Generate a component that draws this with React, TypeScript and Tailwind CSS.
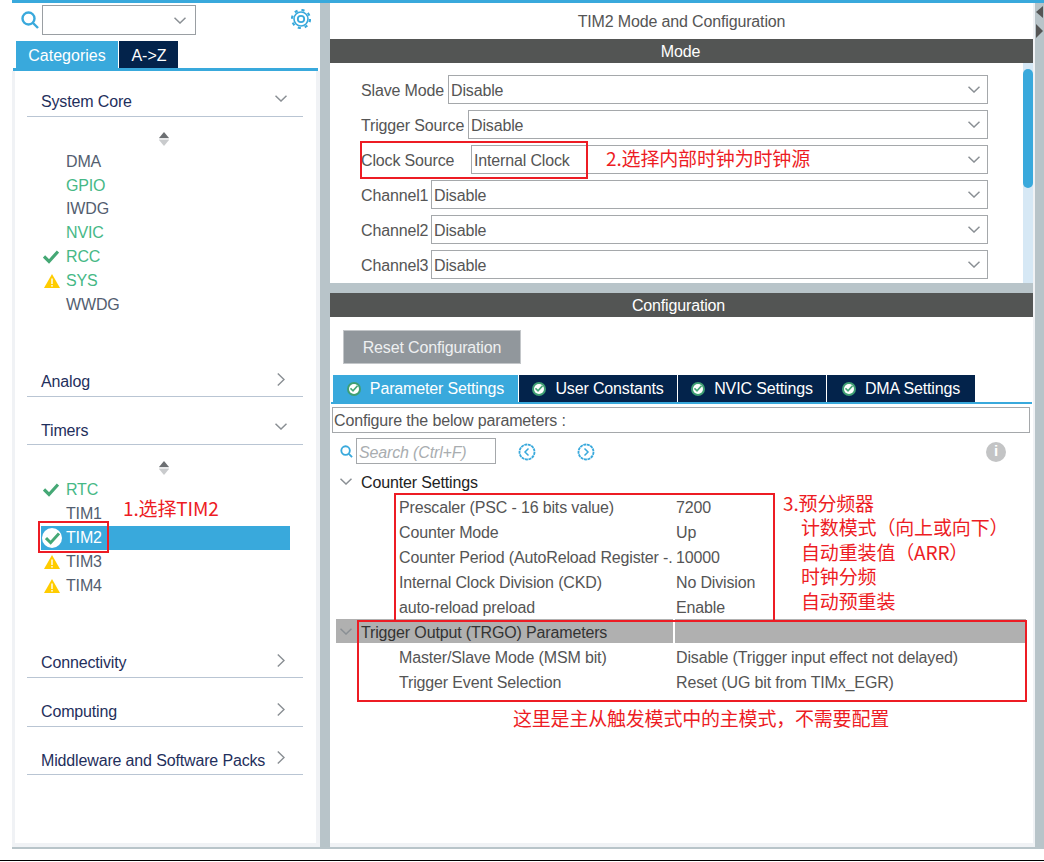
import React from "react";

const font = "[font-family:'Liberation_Sans','Noto_Sans_CJK_SC',sans-serif]";
const cjk = "[font-family:'Noto_Sans_CJK_SC','Liberation_Sans',sans-serif]";

const ChevDown = ({ className = "" }: { className?: string }) => (
  <svg viewBox="0 0 12 7" className={`w-3 h-[7px] ${className}`} fill="none" stroke="#8a8f94" strokeWidth="1.5">
    <path d="M0.5 0.8 L6 6 L11.5 0.8" />
  </svg>
);
const ChevRight = ({ className = "" }: { className?: string }) => (
  <svg viewBox="0 0 8 13" className={`w-2 h-[13px] ${className}`} fill="none" stroke="#8a8f94" strokeWidth="1.4">
    <path d="M0.8 0.5 L7 6.5 L0.8 12.5" />
  </svg>
);
const Check = ({ className = "" }: { className?: string }) => (
  <svg viewBox="0 0 16 14" className={className} fill="none" stroke="#45a875" strokeWidth="3.2">
    <path d="M1 6.5 L6 11.5 L15 1.5" />
  </svg>
);
const Warn = () => (
  <svg viewBox="0 0 16 14" className="w-4 h-[14px] ml-[3px]">
    <path d="M8 0 L16 14 L0 14 Z" fill="#ffcc00" />
    <rect x="7.3" y="4.5" width="1.4" height="5.5" fill="#fff" />
    <rect x="7.3" y="11" width="1.4" height="1.6" fill="#fff" />
  </svg>
);
const Scroller = () => (
  <div className="h-[14px] flex justify-center pr-[4px]">
    <svg viewBox="0 0 10 14" className="w-[10px] h-[14px]">
      <path d="M5 0 L10 6 L0 6 Z" fill="#6c6f72" />
      <rect x="0" y="6.6" width="10" height="0.8" fill="#c4c6c8" />
      <path d="M0 8 L10 8 L5 14 Z" fill="#c9cbcd" />
    </svg>
  </div>
);

type IconT = "check" | "warn" | "selected" | null;
const Item = ({ label, green, icon, selected }: { label: string; green?: boolean; icon?: IconT; selected?: boolean }) => (
  <div className={`h-[23.8px] flex items-center ${selected ? "bg-[#39a9dc]" : ""}`}>
    <div className="w-[25px] flex justify-start shrink-0">
      {icon === "check" && <Check className="w-4 h-[14px] ml-[2px]" />}
      {icon === "warn" && <Warn />}
      {icon === "selected" && (
        <div className="w-5 h-5 ml-px rounded-full bg-white flex items-center justify-center">
          <Check className="w-[15px] h-[13px]" />
        </div>
      )}
    </div>
    <span className={`text-base leading-none ${selected ? "text-white" : green ? "text-[#46b886]" : "text-[#535e70]"}`}>{label}</span>
  </div>
);

const Section = ({ title, open, className = "", textClass = "" }: { title: string; open?: boolean; className?: string; textClass?: string }) => (
  <div className={`h-[33px] ml-[12px] mr-[13px] border-b-[1.5px] border-[#b9c5d3] flex items-start justify-between pl-[14px] pr-[16px] pt-[9px] ${className}`}>
    <span className={`text-base leading-[18px] text-[#1f2f5c] ${textClass}`}>{title}</span>
    {open ? <ChevDown className="mt-[2px]" /> : <ChevRight className="mr-[2px]" />}
  </div>
);

const Sidebar = () => (
  <div className="w-[308px] shrink-0 flex flex-col">
    <div className="h-[38px] flex items-start pt-[2px] shrink-0">
      <svg viewBox="0 0 18 18" className="w-[18px] h-[18px] ml-[9px] mt-[6px]" fill="none" stroke="#39a9dc" strokeWidth="2.4">
        <circle cx="7.5" cy="7.5" r="6" />
        <path d="M12 12 L17 17" />
      </svg>
      <div className="w-[154px] h-[30px] ml-[3px] border border-[#9a9fa3] flex items-center justify-end pr-[9px]">
        <ChevDown />
      </div>
      <svg viewBox="0 0 20 20" className="w-5 h-5 ml-[95px] mt-[4px]" fill="none" stroke="#39a9dc">
        <circle cx="10" cy="10" r="3.2" strokeWidth="1.8" />
        <circle cx="10" cy="10" r="7" strokeWidth="1.6" />
        <circle cx="10" cy="10" r="9" strokeWidth="2.2" strokeDasharray="3.1 4" />
      </svg>
    </div>
    <div className="h-[27px] flex pl-[4px] gap-px shrink-0 text-base text-white tracking-normal">
      <div className="w-[102px] bg-[#39a9dc] flex items-center justify-center pt-[2px]">Categories</div>
      <div className="w-[59px] bg-[#03234b] flex items-center justify-center pt-[2px] pl-px">A-&gt;Z</div>
    </div>
    <div className="h-[3px] ml-px mr-[2px] bg-[#39a9dc] shrink-0" />
    <div className="flex-1 bg-white border-l-[3px] border-r-[4px] border-b-[4px] border-[#f0f2f5] pt-[13px]">
      <Section title="System Core" open />
      <div className="mt-[15px]"><Scroller /></div>
      <div className="ml-[26px] mt-[4px]">
        <Item label="DMA" />
        <Item label="GPIO" green />
        <Item label="IWDG" />
        <Item label="NVIC" green />
        <Item label="RCC" green icon="check" />
        <Item label="SYS" green icon="warn" />
        <Item label="WWDG" />
      </div>
      <Section title="Analog" className="mt-[47.4px]" />
      <Section title="Timers" open className="mt-[15px]" textClass="mt-px" />
      <div className="mt-[16px]"><Scroller /></div>
      <div className="ml-[26px] mr-[26px] mt-[3.6px]">
        <Item label="RTC" green icon="check" />
        <Item label="TIM1" />
        <Item label="TIM2" icon="selected" selected />
        <Item label="TIM3" icon="warn" />
        <Item label="TIM4" icon="warn" />
      </div>
      <Section title="Connectivity" className="mt-[47.9px]" />
      <Section title="Computing" className="mt-[16px]" />
      <Section title="Middleware and Software Packs" className="mt-[15px]" textClass="mt-px" />
    </div>
  </div>
);

const Select = ({ label, value, w }: { label: string; value: string; w: string }) => (
  <div className="h-[29px] flex items-center pl-[31px] pr-[45px] text-base text-[#555]">
    <div className={`${w} shrink-0 whitespace-nowrap pt-[2px]`}>{label}</div>
    <div className="flex-1 h-[29px] border border-[#a5a8ab] flex items-center pl-[2px] pr-[7px] justify-between">
      <span className="pt-[2px]">{value}</span>
      <ChevDown />
    </div>
  </div>
);

const TabIcon = () => (
  <div className="w-[14px] h-[14px] rounded-full bg-[#3f9f73] flex items-center justify-center">
    <div className="w-[10px] h-[10px] rounded-full bg-white flex items-center justify-center">
      <Check className="w-2 h-[7px]" />
    </div>
  </div>
);

const Tab = ({ label, active, w }: { label: string; active?: boolean; w: string }) => (
  <div className={`${w} flex items-center justify-center gap-[9px] text-base text-white ${active ? "bg-[#39a9dc]" : "bg-[#03234b]"}`}>
    <TabIcon />
    <span>{label}</span>
  </div>
);

const ParamRow = ({ k, v }: { k: string; v: string }) => (
  <div className="h-[25px] flex items-center text-base text-[#555] pl-[69px] pt-[2px]">
    <div className="w-[277px] shrink-0 whitespace-nowrap">{k}</div>
    <div className="whitespace-nowrap">{v}</div>
  </div>
);

const Main = () => (
  <div className="w-[705px] shrink-0 flex flex-col bg-white border-r-2 border-[#f0f2f5]">
    <div className="h-[36px] shrink-0 flex items-center justify-center text-base text-[#555] pt-[2px]">TIM2 Mode and Configuration</div>
    <div className="h-[24px] shrink-0 bg-[#535554] flex items-center justify-center text-base text-white pt-[2px] pr-[2px]">Mode</div>
    <div className="h-[220px] shrink-0 relative pt-[12px] flex flex-col gap-[6px]">
      <Select label="Slave Mode" value="Disable" w="w-[87px]" />
      <Select label="Trigger Source" value="Disable" w="w-[107px]" />
      <Select label="Clock Source" value="Internal Clock" w="w-[110px]" />
      <Select label="Channel1" value="Disable" w="w-[70px]" />
      <Select label="Channel2" value="Disable" w="w-[70px]" />
      <Select label="Channel3" value="Disable" w="w-[70px]" />
      <div className="absolute right-0 top-0 bottom-0 w-[10px] bg-[#d6e8f5]">
        <div className="mt-[6px] h-[119px] rounded-[5px] bg-[#39a9dc]" />
      </div>
      <div className="absolute left-[30px] top-[78px] w-[228px] h-[38px] border-2 border-[#ed1c24]" />
      <div className={`absolute left-[276px] top-[83px] text-[19px] leading-[24px] text-[#ed1c24] whitespace-nowrap ${cjk}`}>2.选择内部时钟为时钟源</div>
    </div>
    <div className="h-[10px] shrink-0 bg-[#b8c4c9]" />
    <div className="h-[24px] shrink-0 bg-[#535554] flex items-center justify-center text-base text-white pt-[2px] pr-[6px]">Configuration</div>
    <div className="flex-1 relative border-b-[4px] border-[#f0f2f5]">
      <div className="ml-[13px] mt-[13px] w-[178px] h-[34px] bg-[#91979c] border border-[#c3c6c9] flex items-center justify-center text-base text-[#eef0f1] pt-[2px]">Reset Configuration</div>
      <div className="ml-[3px] mt-[11px] h-[27px] flex gap-px">
        <Tab label="Parameter Settings" active w="w-[185px]" />
        <Tab label="User Constants" w="w-[158px]" />
        <Tab label="NVIC Settings" w="w-[148px]" />
        <Tab label="DMA Settings" w="w-[148px]" />
      </div>
      <div className="mx-px h-[2px] bg-[#39a9dc]" />
      <div className="mx-[2px] mr-[3px] mt-[3px] h-[26px] border border-[#a5a8ab] flex items-center pl-[1px] pt-[2px] text-base text-[#555]">Configure the below parameters :</div>
      <div className="mt-[5px] h-[26px] flex items-center pl-[10px]">
        <svg viewBox="0 0 14 14" className="w-[13px] h-[13px] mt-px" fill="none" stroke="#39a9dc" strokeWidth="2">
          <circle cx="6" cy="6" r="4.6" />
          <path d="M9.5 9.5 L13 13" />
        </svg>
        <div className="ml-[3px] w-[140px] h-[26px] border border-[#a5a8ab] flex items-center pl-[2px] pt-[3px] text-base italic text-[#a9adb0]">Search (Ctrl+F)</div>
        <svg viewBox="0 0 18 18" className="ml-[22px] w-[18px] h-[18px] mt-px" fill="none" stroke="#39a9dc">
          <circle cx="9" cy="9" r="7.5" strokeWidth="1.8" strokeDasharray="3 0.6" />
          <path d="M10.5 5.5 L7 9 L10.5 12.5" strokeWidth="1.5" />
        </svg>
        <svg viewBox="0 0 18 18" className="ml-[41px] w-[18px] h-[18px] mt-px" fill="none" stroke="#39a9dc">
          <circle cx="9" cy="9" r="7.5" strokeWidth="1.8" strokeDasharray="3 0.6" />
          <path d="M7.5 5.5 L11 9 L7.5 12.5" strokeWidth="1.5" />
        </svg>
        <div className={`ml-[391px] mt-px w-5 h-5 rounded-full bg-[#c3c4c5] flex items-center justify-center text-[15px] font-bold text-white ${font}`}>i</div>
      </div>
      <div className="mt-[5px] h-[25px] flex items-center pl-[10px] text-base text-[#222]">
        <ChevDown />
        <span className="ml-[9px] pt-[2px]">Counter Settings</span>
      </div>
      <ParamRow k="Prescaler (PSC - 16 bits value)" v="7200" />
      <ParamRow k="Counter Mode" v="Up" />
      <ParamRow k="Counter Period (AutoReload Register -." v="10000" />
      <ParamRow k="Internal Clock Division (CKD)" v="No Division" />
      <ParamRow k="auto-reload preload" v="Enable" />
      <div className="ml-[6px] mr-[7px] h-[24px] flex bg-[#b0b0b0] text-base text-[#333] items-center">
        <ChevDown className="ml-[4px]" />
        <span className="ml-[9px] pt-[4px] w-[312px] whitespace-nowrap">Trigger Output (TRGO) Parameters</span>
        <div className="w-[2px] h-[24px] bg-white" />
      </div>
      <div className="mt-px" />
      <ParamRow k="Master/Slave Mode (MSM bit)" v="Disable (Trigger input effect not delayed)" />
      <ParamRow k="Trigger Event Selection" v="Reset (UG bit from TIMx_EGR)" />

      <div className="absolute left-[64px] top-[176px] w-[381px] h-[128px] border-2 border-[#ed1c24] border-b-0" />
      <div className="absolute left-[27px] top-[303px] w-[670px] h-[82px] border-2 border-[#ed1c24]" />
      <div className={`absolute left-[453px] top-[173.6px] text-[19px] leading-[24.5px] text-[#ed1c24] whitespace-nowrap ${cjk}`}>
        <div>3.预分频器</div>
        <div className="pl-[18px]">计数模式（向上或向下）</div>
        <div className="pl-[18px]">自动重装值（ARR）</div>
        <div className="pl-[18px]">时钟分频</div>
        <div className="pl-[18px]">自动预重装</div>
      </div>
      <div className={`absolute left-[183px] top-[389px] text-[19px] leading-[24px] tracking-[-0.2px] text-[#ed1c24] whitespace-nowrap ${cjk}`}>这里是主从触发模式中的主模式，不需要配置</div>
    </div>
  </div>
);

export default function App() {
  return (
    <div className={`w-[1044px] h-[862px] bg-white flex flex-col overflow-hidden relative tracking-[-0.15px] ${font}`}>
      <div className="h-[3px] ml-3 bg-[#39a9dc] shrink-0" />
      <div className="h-[844px] ml-3 flex shrink-0">
        <Sidebar />
        <div className="w-[10px] shrink-0 bg-[#b8c4c9]" />
        <Main />
        <div className="flex-1 bg-[#b8c4c9] flex flex-col items-center pt-[3px] gap-[6px]">
          <svg viewBox="0 0 7 12" className="w-[7px] h-3"><path d="M7 0 L0 6 L7 12 Z" fill="#555" /></svg>
          <svg viewBox="0 0 7 14" className="w-[7px] h-[14px]"><path d="M0 0 L7 7 L0 14 Z" fill="#555" /></svg>
        </div>
      </div>
      <div className="h-[2px] ml-3 bg-[#b8c4c9] shrink-0" />
      <div className="h-[11px] shrink-0" />
      <div className="h-px bg-black shrink-0" />
      <div className="absolute left-[38px] top-[521px] w-[71px] h-[32px] border-2 border-[#ed1c24]" />
      <div className={`absolute left-[123px] top-[496px] text-[19px] leading-[24px] text-[#ed1c24] whitespace-nowrap ${cjk}`}>1.选择TIM2</div>
    </div>
  );
}
